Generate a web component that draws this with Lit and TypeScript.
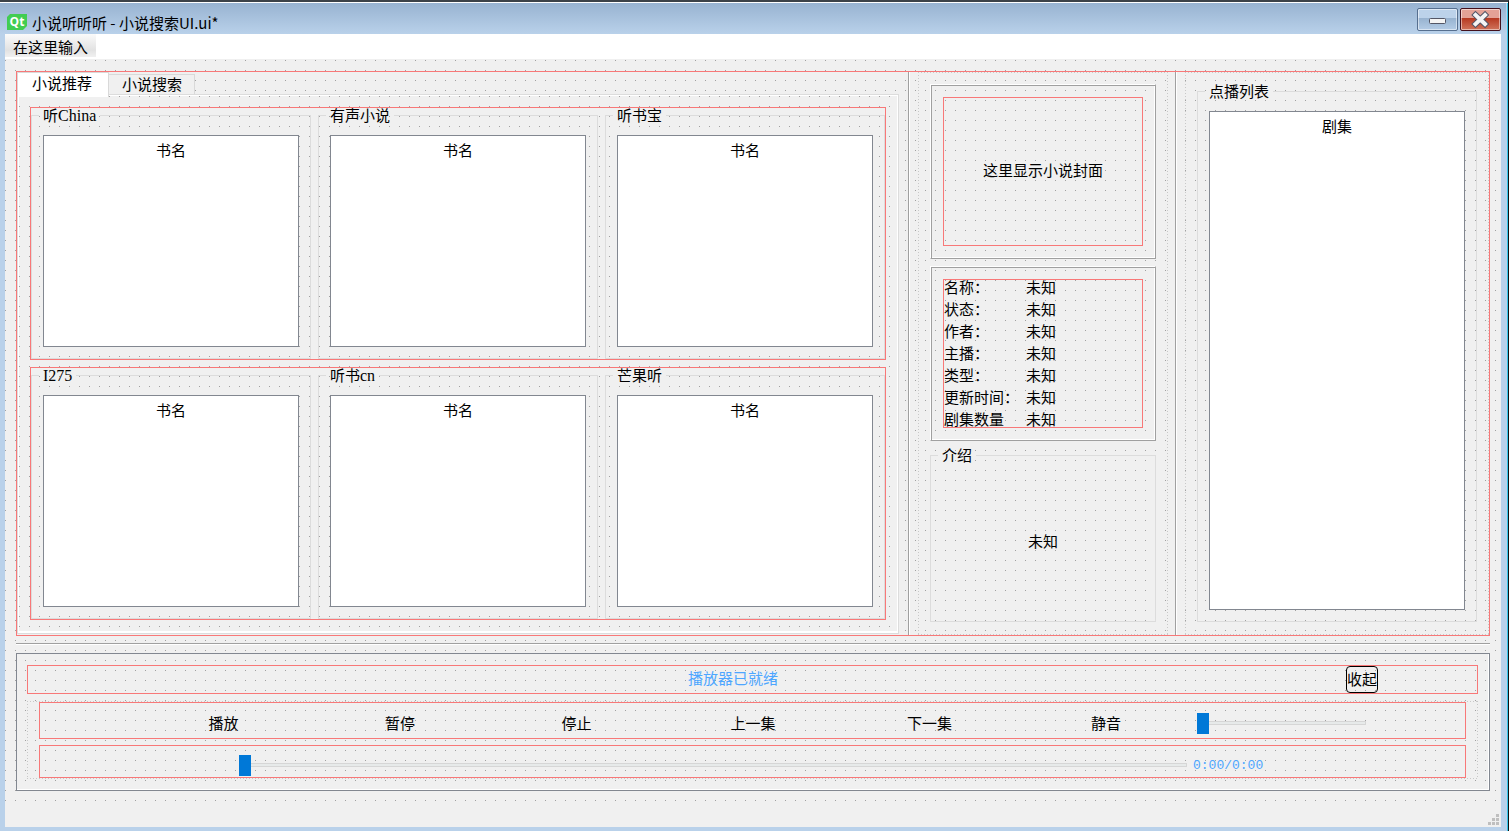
import { LitElement, html, css } from "lit";
import { customElement, property, state } from "lit/decorators.js";

const groupStyles = css`
  .group {
    display: flex;
    flex-direction: column;
    min-width: 0;
    margin: 0;
    padding: 12px 11px 11px;
    border: 1px solid #dcdcdc;
    box-sizing: border-box;
  }
  .group > legend {
    margin-left: -4px;
    padding: 0 4px;
    height: 15px;
    line-height: 16px;
  }
  .latin {
    font-size: 16px;
  }
`;

@customElement("list-group")
class ListGroup extends LitElement {
  @property() caption = "";
  @property() column = "";

  static styles = [
    groupStyles,
    css`
      :host {
        display: flex;
        min-width: 0;
      }
      .group {
        flex: 1;
      }
      .view {
        flex: 1;
        min-height: 0;
        box-sizing: border-box;
        border: 1px solid #828790;
        background: #fff;
      }
      .table {
        width: 100%;
        border-collapse: collapse;
      }
      .head {
        height: 30px;
        padding: 0;
        line-height: 30px;
        font-weight: 400;
        text-align: center;
      }
    `,
  ];

  private captionParts() {
    return this.caption
      .split(/([A-Za-z0-9]+)/)
      .filter((part) => part)
      .map((part) => (/^[A-Za-z0-9]/.test(part) ? html`<span class="latin">${part}</span>` : part));
  }

  render() {
    return html`
      <fieldset class="group">
        <legend>${this.captionParts()}</legend>
        <div class="view">
          <table class="table" aria-label=${this.caption}>
            <thead>
              <tr><th class="head" scope="col">${this.column}</th></tr>
            </thead>
          </table>
        </div>
      </fieldset>
    `;
  }
}

@customElement("app-root")
class AppRoot extends LitElement {
  @state() private tab = 0;

  private tabs = ["小说推荐", "小说搜索"];
  private sources = [
    ["听China", "有声小说", "听书宝"],
    ["I275", "听书cn", "芒果听"],
  ];
  private info = ["名称：", "状态：", "作者：", "主播：", "类型：", "更新时间：", "剧集数量"];
  private actions = ["播放", "暂停", "停止", "上一集", "下一集", "静音"];

  static styles = [
    groupStyles,
    css`
      :host {
        display: block;
        font: 15px/16px "Liberation Serif", "Noto Sans CJK SC", sans-serif;
        color: #000;
        --dots: conic-gradient(at 1px 1px, transparent 75%, #a0a0a0 0) 0 0 / 10px 10px;
        --red: #f87878;
        --dash-x: repeating-linear-gradient(90deg, #c8c8c8 0 1px, transparent 1px 3px);
        --dash-y: repeating-linear-gradient(#c8c8c8 0 1px, transparent 1px 3px);
        --dotted-frame: var(--dash-x) 0 0 / 100% 1px no-repeat,
          var(--dash-x) 0 100% / 100% 1px no-repeat,
          var(--dash-y) 0 0 / 1px 100% no-repeat,
          var(--dash-y) 100% 0 / 1px 100% no-repeat;
      }
      button {
        font: inherit;
        color: inherit;
        padding: 0;
        border: 0;
        background: none;
      }
      .window {
        display: flex;
        flex-direction: column;
        min-height: 100vh;
        box-sizing: border-box;
        border-top: 2px solid #3c4248;
        border-right: 1px solid #101010;
        background: #b9d1ea;
        box-shadow: inset 0 1px #fff, inset -1px 0 #35c6ea;
        padding: 1px 7px 4px 5px;
      }
      .titlebar {
        display: flex;
        align-items: center;
        height: 31px;
        margin: 0 -5px;
        padding: 0 5px 0 7px;
        background: linear-gradient(#98b3d1, #b9d1ea);
        font-family: "Noto Sans CJK SC", sans-serif;
      }
      .logo {
        width: 20px;
        height: 16px;
        margin: 6px 5px 0 0;
        font: 700 12px "Open Sans", sans-serif;
      }
      .title {
        flex: 1;
        margin-top: 8px;
      }
      .caption-buttons {
        display: flex;
        align-self: flex-start;
        gap: 2px;
        padding-top: 5px;
      }
      .caption-button {
        display: block;
        width: 41px;
        height: 23px;
        box-sizing: border-box;
        border: 1px solid #566f8f;
        border-radius: 2px;
        box-shadow: inset 0 0 0 1px #ffffff80;
        background: linear-gradient(#bcd2ea 0 45%, #98b3d0 45%, #b4cce6);
      }
      .caption-button.close {
        border-color: #43101c;
        background: linear-gradient(#e4a296 0 45%, #b73a22 45%, #d0745c);
      }
      .glyph {
        display: block;
        width: 39px;
        height: 21px;
      }
      .menubar {
        height: 25px;
        background: #fff;
        font-family: "Noto Sans CJK SC", sans-serif;
      }
      .menu {
        height: 23px;
        padding: 2px 8px 0;
        line-height: 18px;
        background: linear-gradient(#fafafa, #e2e2e2 70%, #f0f0f0);
      }
      .canvas {
        flex: 1;
        display: flex;
        flex-direction: column;
        padding: 12px 11px 14px;
        background: var(--dots) #f0f0f0;
        background-position: 0 1px;
      }
      .splitter {
        flex: 1;
        display: grid;
        grid-template-columns: 893fr 267fr 312fr;
        border: 1px solid var(--red);
      }
      .pane {
        display: flex;
        min-width: 0;
        box-sizing: border-box;
      }
      .pane.handle {
        border-right: 1px solid #fff;
        box-shadow: inset -1px 0 #a0a0a0;
      }
      .pane.tabs {
        flex-direction: column;
        padding: 0 10px 1px 0;
      }
      .pane.detail {
        padding: 0 8px;
      }
      .pane.queue {
        padding-left: 8px;
      }
      .layout {
        flex: 1;
        display: flex;
        flex-direction: column;
        gap: 7px;
        min-width: 0;
        box-sizing: border-box;
        padding: 12px 12px 13px;
        background: var(--dotted-frame);
      }
      .fill {
        flex: 1;
      }
      .tabbar {
        display: flex;
        align-items: flex-end;
        height: 23px;
      }
      .tab {
        height: 21px;
        padding: 0 12px 0 13px;
        border: 1px solid #d9d9d9;
        border-left: 0;
        border-bottom: 0;
        background: #f0f0f0;
      }
      .tab[aria-selected="true"] {
        height: 25px;
        margin-bottom: -2px;
        padding: 0 16px 3px 14px;
        border-left: 1px solid #d9d9d9;
        background: #fff;
        z-index: 1;
      }
      .page {
        flex: 1;
        display: flex;
        flex-direction: column;
        gap: 7px;
        padding: 11px;
        margin: 0 1px 1px;
        border: 1px solid #fff;
        border-bottom-width: 2px;
        outline: 1px solid #dcdcdc;
        background: var(--dots) #f0f0f0;
      }
      .row {
        flex: 1;
        display: grid;
        grid-template-columns: repeat(3, 1fr);
        gap: 7px;
        border: 1px solid var(--red);
      }
      .bevel {
        border: 1px solid;
        border-color: #fff #a0a0a0 #a0a0a0 #fff;
        box-shadow: inset 1px 1px #a0a0a0, inset -1px -1px #fff;
        padding: 12px;
      }
      .cell {
        display: grid;
        align-content: center;
        box-sizing: border-box;
        height: 149px;
        border: 1px solid var(--red);
      }
      .cover {
        padding-bottom: 2px;
        text-align: center;
      }
      .info {
        margin: 0;
        padding-top: 1px;
        grid-template-columns: 82px 1fr;
        row-gap: 6px;
      }
      .info dt {
        white-space: nowrap;
      }
      .info dd {
        margin: 0;
      }
      .intro {
        margin: auto;
        padding-bottom: 2px;
      }
      .rule {
        height: 1px;
        margin: 7px 0 8px;
        border: 0;
        border-top: 1px solid #a0a0a0;
        background: #fff;
      }
      .player {
        padding: 11px 11px 11px 10px;
        border: 1px solid #828790;
        box-shadow: inset -1px -1px #fff;
      }
      .strip {
        box-sizing: border-box;
        border: 1px solid var(--red);
        display: flex;
        align-items: center;
      }
      .status {
        height: 29px;
        margin-bottom: 7px;
        padding: 0 99px 0 92px;
        color: #4da6ff;
      }
      .message {
        flex: 1;
        padding-bottom: 2px;
        text-align: center;
      }
      .collapse {
        width: 32px;
        height: 27px;
        border: 1px solid #000;
        border-radius: 4px;
        color: #000;
        white-space: nowrap;
      }
      .controls {
        display: flex;
        flex-direction: column;
        gap: 6px;
        padding: 1px 12px;
        background: var(--dotted-frame);
      }
      .actions {
        display: grid;
        grid-template-columns: 95fr repeat(6, 176fr) 270fr;
        height: 37px;
      }
      .action {
        height: 30px;
        padding-top: 7px;
      }
      .action:first-of-type {
        grid-column: 2;
      }
      .progress {
        gap: 6px;
        height: 33px;
        padding-left: 199px;
      }
      .slider {
        appearance: none;
        display: block;
        height: 22px;
        margin: 0;
        background: none;
      }
      .slider.volume {
        width: 169px;
        margin: 4px 0 0 3px;
      }
      .slider.seek {
        flex: 1;
        min-width: 0;
        margin-top: 6px;
      }
      .slider::-webkit-slider-runnable-track {
        height: 4px;
        box-sizing: border-box;
        border: 1px solid #d6d6d6;
        background: #e7eaea;
      }
      .slider::-webkit-slider-thumb {
        appearance: none;
        width: 12px;
        height: 21px;
        margin: -9px 0 0 -1px;
        background: #0078d7;
      }
      .time {
        width: 272px;
        padding-top: 8px;
        font-family: "Liberation Mono", monospace;
        font-size: 13px;
        color: #4da6ff;
      }
      .statusbar {
        display: flex;
        justify-content: flex-end;
        align-items: flex-end;
        height: 22px;
        background: #f0f0f0;
      }
      .grip {
        width: 11px;
        height: 11px;
        margin: 0 2px 2px 0;
      }
    `,
  ];

  render() {
    return html`
      <div class="window">
        <header class="titlebar">
          <svg class="logo" viewBox="0 0 20 16" aria-hidden="true">
            <path d="M3 0H20V12L16 16H0V3Z" fill="#41cd52" />
            <text x="10" y="12" text-anchor="middle" fill="#fff">Qt</text>
          </svg>
          <span class="title">小说听听听 - 小说搜索UI.ui*</span>
          <div class="caption-buttons">
            <button class="caption-button" aria-label="最小化">
              <svg class="glyph" viewBox="0 0 39 21">
                <rect x="11.500" y="9.500" width="16" height="5" rx="1" fill="#f4f4f4" stroke="#535666" />
              </svg>
            </button>
            <button class="caption-button close" aria-label="关闭">
              <svg class="glyph" viewBox="0 0 39 21">
                <path d="M14.500 6L24 15M24 6L14.500 15" stroke="#535666" stroke-width="6" stroke-linecap="square" />
                <path d="M14.500 6L24 15M24 6L14.500 15" stroke="#f4f4f4" stroke-width="4" stroke-linecap="square" />
              </svg>
            </button>
          </div>
        </header>
        <nav class="menubar"><button class="menu">在这里输入</button></nav>
        <main class="canvas">
          <div class="splitter">
            <section class="pane handle tabs">
              <div class="tabbar" role="tablist">
                ${this.tabs.map(
                  (name, i) => html`<button
                    class="tab"
                    role="tab"
                    aria-selected=${this.tab === i ? "true" : "false"}
                    @click=${() => (this.tab = i)}
                  >${name}</button>`
                )}
              </div>
              <div class="page" role="tabpanel">
                ${this.sources.map(
                  (row) => html`<div class="row">
                    ${row.map((name) => html`<list-group caption=${name} column="书名"></list-group>`)}
                  </div>`
                )}
              </div>
            </section>
            <section class="pane handle detail">
              <div class="layout">
                <div class="bevel"><div class="cell cover">这里显示小说封面</div></div>
                <div class="bevel">
                  <dl class="cell info">
                    ${this.info.map((name) => html`<dt>${name}</dt><dd>未知</dd>`)}
                  </dl>
                </div>
                <fieldset class="group fill">
                  <legend>介绍</legend>
                  <div class="intro">未知</div>
                </fieldset>
              </div>
            </section>
            <section class="pane queue">
              <div class="layout">
                <list-group class="fill" caption="点播列表" column="剧集"></list-group>
              </div>
            </section>
          </div>
          <hr class="rule" />
          <section class="player">
            <div class="strip status">
              <span class="message">播放器已就绪</span>
              <button class="collapse">收起</button>
            </div>
            <div class="controls">
              <div class="strip actions">
                ${this.actions.map((name) => html`<button class="action">${name}</button>`)}
                <input class="slider volume" type="range" min="0" max="100" value="0" aria-label="音量" />
              </div>
              <div class="strip progress">
                <input class="slider seek" type="range" min="0" max="100" value="0" aria-label="进度" />
                <span class="time">0:00/0:00</span>
              </div>
            </div>
          </section>
        </main>
        <footer class="statusbar">
          <svg class="grip" viewBox="0 0 11 11" fill="#bfbfbf" aria-hidden="true">
            <path d="M8 0h3v3h-3zM4 4h3v3h-3zM8 4h3v3h-3zM0 8h3v3h-3zM4 8h3v3h-3zM8 8h3v3h-3z" />
          </svg>
        </footer>
      </div>
    `;
  }
}
